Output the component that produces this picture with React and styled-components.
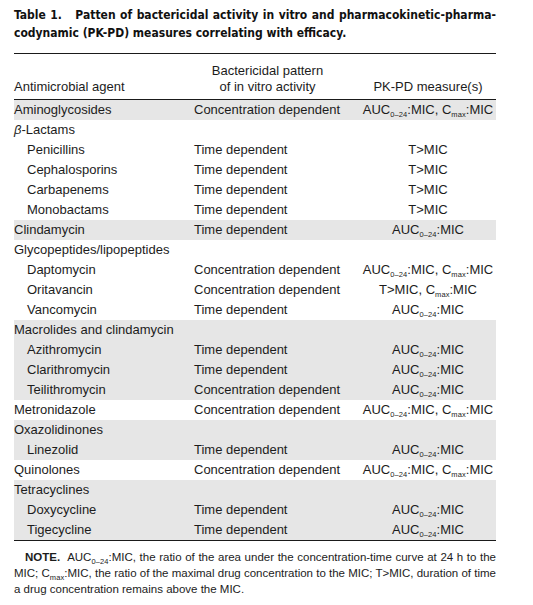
import styled, { createGlobalStyle } from "styled-components";

const GlobalStyle = createGlobalStyle`
  body {
    margin: 0;
    background: #fff;
    color: #1c1c1c;
    font-family: "Liberation Sans", Arial, sans-serif;
  }
`;

const Page = styled.div`
  width: 482px;
  padding: 6px 0 0 14px;
`;

const Title = styled.h1`
  margin: 0;
  font: 700 12px/18px "DejaVu Sans Condensed", "DejaVu Sans", sans-serif;
  font-stretch: condensed;
  color: #111;
`;

const TitleLine = styled.div`
  white-space: nowrap;
  text-align: ${(p) => (p.$justify ? "justify" : "left")};
  text-align-last: ${(p) => (p.$justify ? "justify" : "left")};
`;

const Table = styled.div`
  margin-top: 11px;
  border-top: 1px solid #1a1a1a;
  border-bottom: 1px solid #1a1a1a;
  font-size: 13px;
`;

const Head = styled.div`
  display: grid;
  grid-template-columns: 180px 166px 1fr;
  align-items: end;
  padding: 9px 0 4px;
  line-height: 16px;
  border-bottom: 1px solid #1a1a1a;
`;

const HeadCell = styled.div`
  text-align: ${(p) => p.$align || "left"};
  padding-right: ${(p) => p.$pr || 0}px;
`;

const Row = styled.div`
  display: grid;
  grid-template-columns: 180px 166px 1fr;
  height: 20px;
  line-height: 20px;
  background: ${(p) => (p.$shaded ? "#e6e6e6" : "transparent")};
`;

const Agent = styled.div`
  padding-left: ${(p) => (p.$sub ? 13 : 0)}px;
  white-space: nowrap;
`;

const Pattern = styled.div`
  white-space: nowrap;
`;

const Measure = styled.div`
  text-align: center;
  white-space: nowrap;
`;

const Sub = styled.span`
  display: inline-block;
  font-size: 7.5px;
  line-height: 8px;
  text-indent: 0;
  vertical-align: -3px;
  letter-spacing: 0.1px;
`;

const Note = styled.p`
  margin: 9px 0 0;
  font-size: 11.5px;
  line-height: 15px;
  text-align: justify;
  text-indent: 11px;
`;

const NoteLabel = styled.b`
  font-weight: 700;
  margin-right: 7px;
`;

const AUC = () => (
  <>
    AUC<Sub>0–24</Sub>:MIC
  </>
);

const CMAX = () => (
  <>
    C<Sub>max</Sub>:MIC
  </>
);

const both = (
  <>
    <AUC />, <CMAX />
  </>
);
const auc = <AUC />;
const tmic = "T>MIC";

const rows = [
  { name: "Aminoglycosides", pattern: "Concentration dependent", measure: both, shaded: true },
  { name: <><i>β</i>-Lactams</> },
  { name: "Penicillins", sub: true, pattern: "Time dependent", measure: tmic },
  { name: "Cephalosporins", sub: true, pattern: "Time dependent", measure: tmic },
  { name: "Carbapenems", sub: true, pattern: "Time dependent", measure: tmic },
  { name: "Monobactams", sub: true, pattern: "Time dependent", measure: tmic },
  { name: "Clindamycin", pattern: "Time dependent", measure: auc, shaded: true },
  { name: "Glycopeptides/lipopeptides" },
  { name: "Daptomycin", sub: true, pattern: "Concentration dependent", measure: both },
  { name: "Oritavancin", sub: true, pattern: "Concentration dependent", measure: <>T&gt;MIC, <CMAX /></> },
  { name: "Vancomycin", sub: true, pattern: "Time dependent", measure: auc },
  { name: "Macrolides and clindamycin", shaded: true },
  { name: "Azithromycin", sub: true, pattern: "Time dependent", measure: auc, shaded: true },
  { name: "Clarithromycin", sub: true, pattern: "Time dependent", measure: auc, shaded: true },
  { name: "Teilithromycin", sub: true, pattern: "Concentration dependent", measure: auc, shaded: true },
  { name: "Metronidazole", pattern: "Concentration dependent", measure: both },
  { name: "Oxazolidinones", shaded: true },
  { name: "Linezolid", sub: true, pattern: "Time dependent", measure: auc, shaded: true },
  { name: "Quinolones", pattern: "Concentration dependent", measure: both },
  { name: "Tetracyclines", shaded: true },
  { name: "Doxycycline", sub: true, pattern: "Time dependent", measure: auc, shaded: true },
  { name: "Tigecycline", sub: true, pattern: "Time dependent", measure: auc, shaded: true },
];

export default function App() {
  return (
    <Page>
      <GlobalStyle />
      <Title>
        <TitleLine $justify>
          Table 1.&nbsp;&nbsp; Patten of bactericidal activity in vitro and pharmacokinetic-pharma-
        </TitleLine>
        <TitleLine>codynamic (PK-PD) measures correlating with efficacy.</TitleLine>
      </Title>
      <Table>
        <Head>
          <HeadCell>Antimicrobial agent</HeadCell>
          <HeadCell $align="center" $pr={19}>
            Bactericidal pattern
            <br />
            of in vitro activity
          </HeadCell>
          <HeadCell $align="center">PK-PD measure(s)</HeadCell>
        </Head>
        {rows.map((r, i) => (
          <Row key={i} $shaded={r.shaded}>
            <Agent $sub={r.sub}>{r.name}</Agent>
            <Pattern>{r.pattern}</Pattern>
            <Measure>{r.measure}</Measure>
          </Row>
        ))}
      </Table>
      <Note>
        <NoteLabel>NOTE.</NoteLabel>
        <AUC />, the ratio of the area under the concentration-time curve at 24 h to the MIC;{" "}
        <CMAX />, the ratio of the maximal drug concentration to the MIC; T&gt;MIC, duration of time a
        drug concentration remains above the MIC.
      </Note>
    </Page>
  );
}
